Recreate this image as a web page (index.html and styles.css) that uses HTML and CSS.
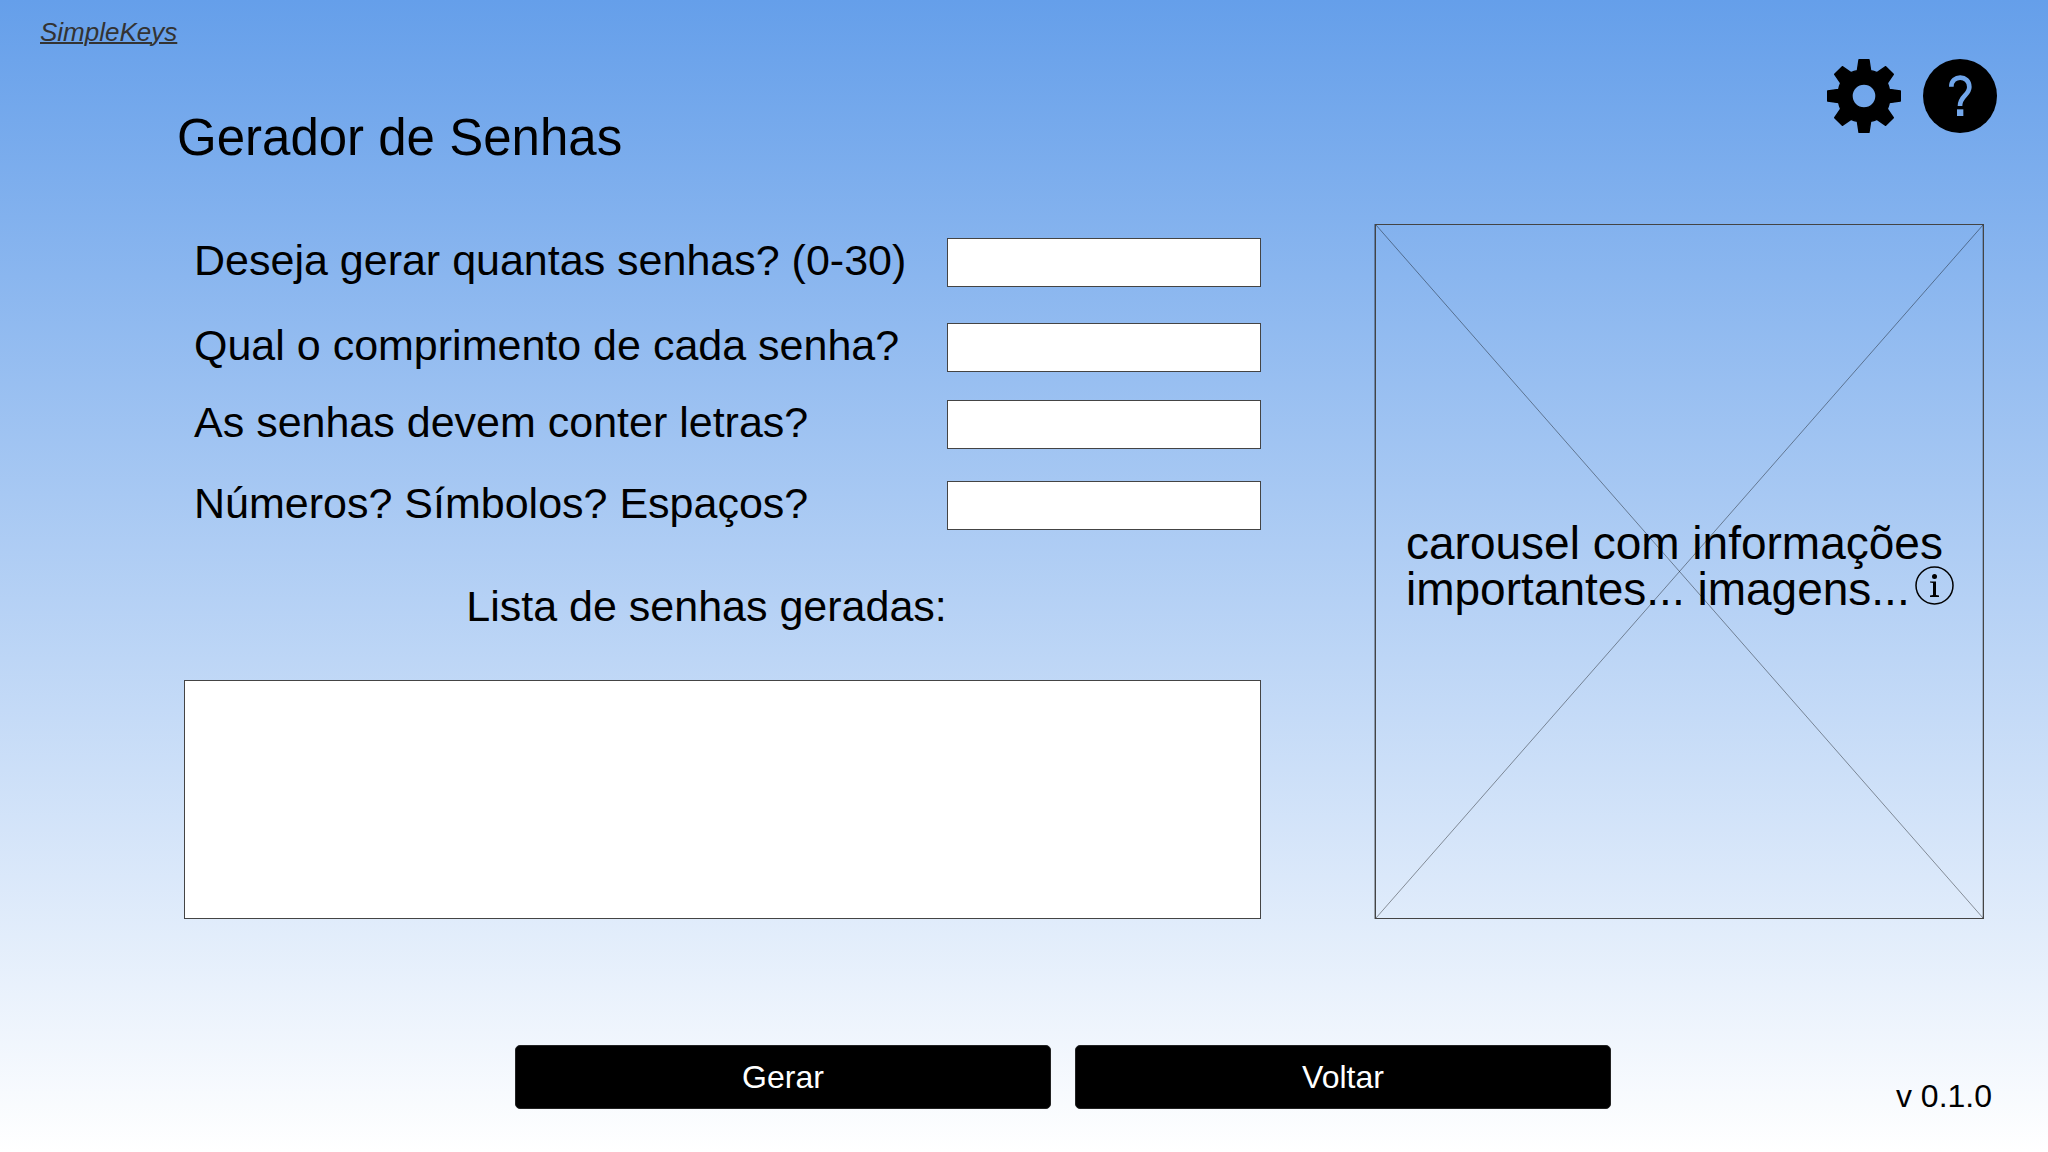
FILE: index.html
```html
<!DOCTYPE html>
<html lang="pt-BR">
<head>
<meta charset="utf-8">
<meta name="viewport" content="width=device-width, initial-scale=1">
<title>SimpleKeys – Gerador de Senhas</title>
<link rel="stylesheet" href="styles.css">
</head>
<body>
<header class="header">
  <div class="heading">
    <a class="brand" href="#">SimpleKeys</a>
    <h1 class="title">Gerador de Senhas</h1>
  </div>
  <nav class="tools">
    <button class="icon-button" type="button" aria-label="Configurações">
      <svg class="icon" viewBox="0 0 222 222" aria-hidden="true">
        <path fill-rule="evenodd" stroke="#000" stroke-width="4" stroke-linejoin="round" d="M96 2H126L131 35Q141 37 150 41L176 23L199 46L181 72Q185 81 187 91L220 96V126L187 131Q185 141 181 150L199 176L176 199L150 181Q141 185 131 187L126 220H96L91 187Q81 185 72 181L46 199L23 176L41 150Q37 141 35 131L2 126V96L35 91Q37 81 41 72L23 46L46 23L72 41Q81 37 91 35ZM111 75A36 36 0 1 0 111 147A36 36 0 1 0 111 75Z"/>
      </svg>
    </button>
    <button class="icon-button" type="button" aria-label="Ajuda">
      <svg class="icon" viewBox="0 0 222 222" aria-hidden="true">
        <mask id="question">
          <rect width="222" height="222" fill="#fff"/>
          <path d="M85 83C85 46 139 47 139 84C139 109 111 110 111 141" fill="none" stroke="#000" stroke-width="14"/>
          <rect x="102" y="151" width="19" height="20" fill="#000"/>
        </mask>
        <circle cx="111" cy="111" r="111" mask="url(#question)"/>
      </svg>
    </button>
  </nav>
</header>

<main class="content">
  <form class="generator" id="generator">
    <div class="field field-count">
      <label for="count">Deseja gerar quantas senhas? (0-30)</label>
      <input class="box" id="count" type="text">
    </div>
    <div class="field field-length">
      <label for="length">Qual o comprimento de cada senha?</label>
      <input class="box" id="length" type="text">
    </div>
    <div class="field field-letters">
      <label for="letters">As senhas devem conter letras?</label>
      <input class="box" id="letters" type="text">
    </div>
    <div class="field">
      <label for="others">Números? Símbolos? Espaços?</label>
      <input class="box" id="others" type="text">
    </div>
    <label class="list-label" for="list">Lista de senhas geradas:</label>
    <textarea class="box list" id="list"></textarea>
  </form>

  <section class="carousel">
    <p class="carousel-text">carousel com informações<br>importantes... imagens...<svg class="info" viewBox="0 0 39 39" aria-hidden="true"><circle cx="19.500" cy="19.500" r="18.500" fill="none" stroke="#000" stroke-width="1.500"/><circle cx="19.500" cy="10.500" r="2.500"/><path d="M15 15.500H21V29L24 29.500V31H15V29.500L18 29V17L15 16.500Z"/></svg></p>
    <svg class="cross" viewBox="0 0 100 100" preserveAspectRatio="none" aria-hidden="true">
      <path d="M0 0L100 100M100 0L0 100" vector-effect="non-scaling-stroke"/>
    </svg>
  </section>
</main>

<footer class="footer">
  <div class="actions">
    <button class="action" type="submit" form="generator">Gerar</button>
    <button class="action" type="button">Voltar</button>
  </div>
  <span class="version">v 0.1.0</span>
</footer>
</body>
</html>
```
FILE: styles.css
```css
* {
  box-sizing: border-box;
}

body {
  display: flex;
  flex-direction: column;
  min-height: 100vh;
  margin: 0;
  background: linear-gradient(#659fea, #fff);
  color: #000;
  font-family: "Liberation Sans", Arial, sans-serif;
}

button,
input,
textarea {
  margin: 0;
  font: inherit;
}

.header {
  display: flex;
  justify-content: space-between;
  padding: 17px 51px 57px 40px;
}

.heading {
  display: flex;
  flex-direction: column;
  align-items: flex-start;
  gap: 62px;
}

.brand {
  color: #333;
  font-size: 26px;
  font-style: italic;
  line-height: 30px;
  text-decoration-thickness: 2px;
}

.title {
  margin: 0;
  padding-left: 137px;
  font-size: 51px;
  font-weight: 400;
  line-height: 58px;
}

.tools {
  display: flex;
  align-items: flex-start;
  gap: 22px;
  padding-top: 42px;
}

.icon-button {
  padding: 0;
  border: 0;
  background: none;
  cursor: pointer;
}

.icon {
  display: block;
  width: 74px;
  height: 74px;
}

.content {
  display: grid;
  grid-template-columns: 1077fr 609fr;
  gap: 114px;
  padding: 0 64px 48px 184px;
}

.generator {
  display: flex;
  flex-direction: column;
  padding-top: 14px;
}

.field {
  display: grid;
  grid-template-columns: 1fr 314px;
  padding-left: 10px;
  font-size: 43px;
  line-height: 44px;
}

.field-count {
  margin-bottom: 36px;
}

.field-length {
  margin-bottom: 28px;
}

.field-letters {
  margin-bottom: 32px;
}

.box {
  width: 100%;
  height: 49px;
  padding: 0 8px;
  border: 1px solid #444;
  border-radius: 0;
  background: #fff;
  font-size: 32px;
}

.list-label {
  padding: 54px 32px 52px 0;
  font-size: 43px;
  line-height: 44px;
  text-align: center;
}

.list {
  display: block;
  height: 239px;
  padding: 8px;
  resize: none;
}

.carousel {
  position: relative;
  display: flex;
  align-items: center;
  padding: 0 0 12px 30px;
  border: 1px solid #444;
  box-shadow: -1px 0 rgba(0, 0, 0, 0.3), inset -1px 0 rgba(0, 0, 0, 0.2);
}

.carousel-text {
  margin: 0;
  font-size: 46px;
  line-height: 46px;
  white-space: nowrap;
}

.info {
  width: 39px;
  height: 39px;
  margin-left: 5px;
  vertical-align: top;
}

.cross {
  position: absolute;
  inset: 0;
  width: 100%;
  height: 100%;
  fill: none;
  stroke: rgba(0, 0, 0, 0.4);
  stroke-width: 1px;
  pointer-events: none;
}

.footer {
  display: grid;
  grid-template-columns: 1fr minmax(0, 1096px) 1fr;
  margin-top: auto;
  padding: 0 56px 43px 134px;
  font-size: 32px;
}

.actions {
  display: grid;
  grid-column: 2;
  grid-template-columns: 1fr 1fr;
  gap: 24px;
}

.action {
  height: 64px;
  padding: 0;
  border: 1px solid #222;
  border-radius: 5px;
  background: #000;
  color: #fff;
  cursor: pointer;
}

.version {
  align-self: end;
  justify-self: end;
  line-height: 26px;
}
```
